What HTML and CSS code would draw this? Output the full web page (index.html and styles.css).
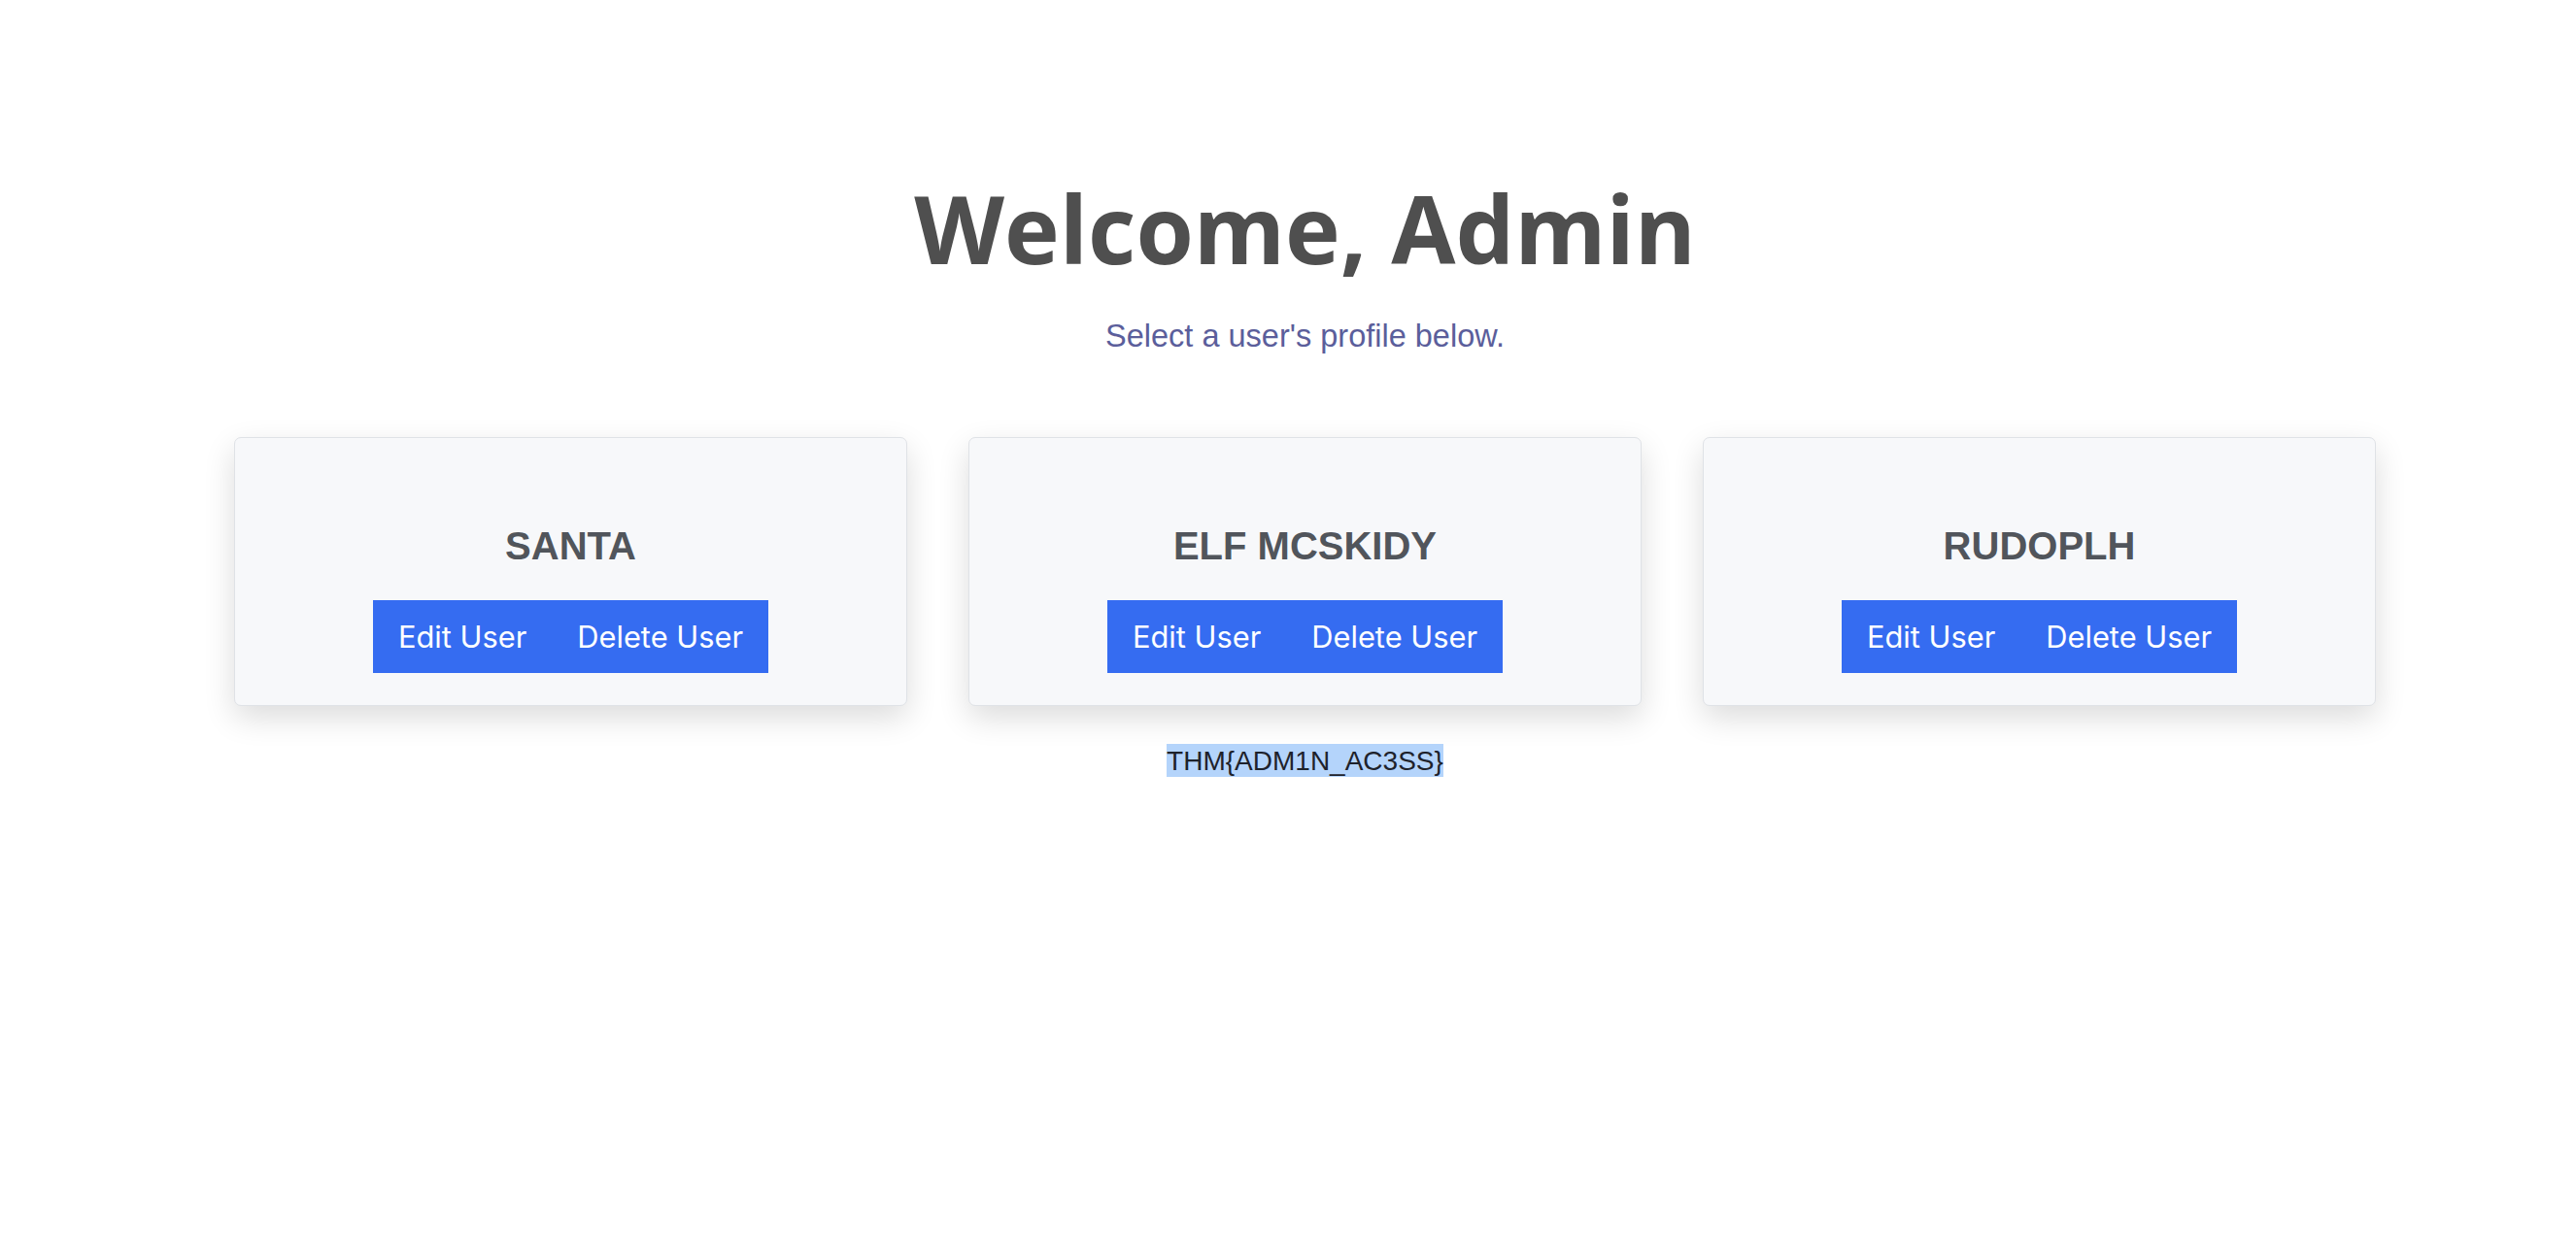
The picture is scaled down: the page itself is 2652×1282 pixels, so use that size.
FILE: index.html
```html
<!DOCTYPE html>
<html lang="en">
<head>
<meta charset="utf-8">
<title>Admin</title>
<link rel="stylesheet" href="styles.css">
</head>
<body>
<main class="page">
  <h1 class="title">Welcome, Admin</h1>
  <p class="subtitle">Select a user's profile below.</p>
  <section class="cards">
    <div class="card">
      <h2 class="card-name">SANTA</h2>
      <div class="actions">
        <button class="btn">Edit User</button><button class="btn">Delete User</button>
      </div>
    </div>
    <div class="card">
      <h2 class="card-name">ELF MCSKIDY</h2>
      <div class="actions">
        <button class="btn">Edit User</button><button class="btn">Delete User</button>
      </div>
    </div>
    <div class="card">
      <h2 class="card-name">RUDOPLH</h2>
      <div class="actions">
        <button class="btn">Edit User</button><button class="btn">Delete User</button>
      </div>
    </div>
  </section>
  <p class="flag"><span class="flag-text">THM{ADM1N_AC3SS}</span></p>
</main>
</body>
</html>
```

FILE: styles.css
```css
html, body {
  margin: 0;
  padding: 0;
  background: #ffffff;
}

.page {
  padding: 169px 0 0 35px;
  display: flex;
  flex-direction: column;
  align-items: center;
}

.title {
  margin: 0;
  font-family: "Open Sans", "Liberation Sans", sans-serif;
  font-weight: 700;
  font-size: 96px;
  line-height: normal;
  color: #4f4f4f;
  text-align: center;
}

.subtitle {
  margin: 28px 0 0;
  font-family: "Liberation Sans", Arial, sans-serif;
  font-size: 32.5px;
  line-height: normal;
  color: #5b5e9b;
}

.cards {
  margin-top: 85px;
  display: flex;
  justify-content: center;
  gap: 63px;
}

.card {
  box-sizing: border-box;
  width: 693px;
  padding: 89px 0 33px;
  background: #f7f8fa;
  border: 1px solid #dfe2e6;
  border-radius: 7px;
  box-shadow: 0 12px 32px rgba(0, 0, 0, 0.14);
  display: flex;
  flex-direction: column;
  align-items: center;
}

.card-name {
  margin: 0;
  font-family: "Liberation Sans", Arial, sans-serif;
  font-weight: 700;
  font-size: 40px;
  line-height: normal;
  color: #51555b;
}

.actions {
  margin-top: 33px;
  display: flex;
}

.btn {
  margin: 0;
  border: 0;
  border-radius: 0;
  padding: 19px 26px 19px;
  background: #356cf1;
  color: #ffffff;
  font-family: Inter, "Liberation Sans", sans-serif;
  font-size: 30.8px;
  line-height: normal;
  cursor: pointer;
}

.flag {
  margin: 41px 0 0;
  font-family: "Liberation Sans", Arial, sans-serif;
  font-size: 28px;
  line-height: normal;
  color: #1e222b;
}

.flag-text {
  background: #b4d4fb;
  padding: 2px 0;
}
```
